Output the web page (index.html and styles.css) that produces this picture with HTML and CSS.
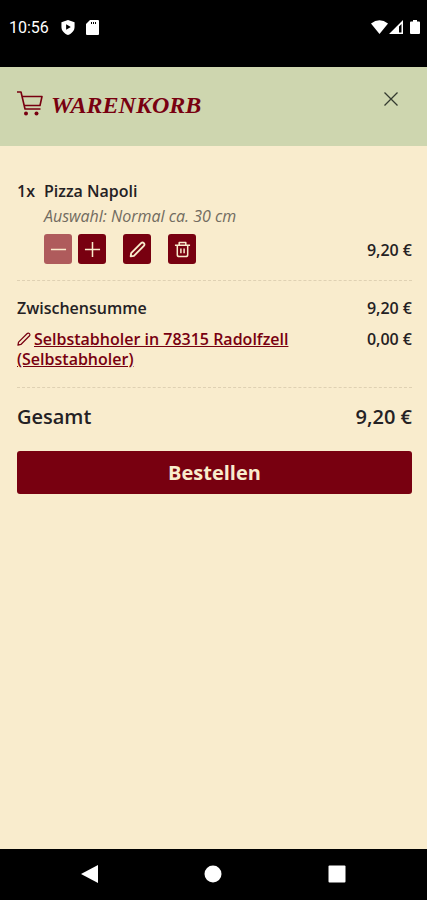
FILE: index.html
```html
<!DOCTYPE html>
<html lang="de">
<head>
<meta charset="utf-8">
<meta name="viewport" content="width=device-width, initial-scale=1">
<title>Warenkorb</title>
<link rel="stylesheet" href="styles.css">
</head>
<body>
<div class="status-bar">
  <time class="clock">10:56</time>
  <svg class="status-icon shield" viewBox="0 0 14 16" aria-hidden="true"><path fill="#fff" fill-rule="evenodd" d="M7 0 14 2.500V7.500C14 11.500 11 14.500 7 16 3 14.500 0 11.500 0 7.500V2.500ZM5 4.500V10.500L10 7.500Z"/></svg>
  <svg class="status-icon card" viewBox="0 0 13 15" aria-hidden="true"><path fill="#fff" d="M4 0H12Q13 0 13 1V14Q13 15 12 15H1Q0 15 0 14V4Z"/><path stroke="#000" stroke-width="1" d="M5.500 2V4M7.500 2V4M9.500 2V4"/></svg>
  <div class="signals">
    <svg class="wifi" viewBox="0 0 17 14" aria-hidden="true"><path fill="#fff" d="M0 3.500Q8.500-3 17 3.500L8.500 14Z"/></svg>
    <svg class="cell" viewBox="0 0 14 14" aria-hidden="true"><path fill="#fff" fill-rule="evenodd" d="M14 0V14H0ZM12.500 4 10 6.500V12.500H12.500Z"/></svg>
    <svg class="battery" viewBox="0 0 10 14" aria-hidden="true"><path fill="#fff" d="M3 0H7V1.500H9Q10 1.500 10 2.500V13Q10 14 9 14H1Q0 14 0 13V2.500Q0 1.500 1 1.500H3Z"/></svg>
  </div>
</div>
<header class="cart-header">
  <svg class="cart-icon" viewBox="0 0 26 25" aria-hidden="true"><g fill="none" stroke="currentColor" stroke-width="1.600" stroke-linejoin="round"><path d="M0 1H4L8 18H23.500"/><path d="M5 5.500H25L23 14.500H7"/></g><circle cx="9" cy="22.500" r="2" fill="currentColor"/><circle cx="19.500" cy="22.500" r="2" fill="currentColor"/></svg>
  <h1 class="title">WARENKORB</h1>
  <button class="close" type="button" aria-label="Schließen"><svg viewBox="0 0 14 14" aria-hidden="true"><path d="M.5.5 13.500 13.500M13.500.5.5 13.500" stroke="currentColor" stroke-width="1.300"/></svg></button>
</header>
<main class="cart">
  <section class="item">
    <span class="quantity">1x</span>
    <div class="details">
      <h2 class="name">Pizza Napoli</h2>
      <p class="option">Auswahl: Normal ca. 30 cm</p>
      <div class="actions">
        <button class="action" type="button" disabled aria-label="Menge verringern"><svg viewBox="0 0 18 18" aria-hidden="true"><path d="M1 9H17"/></svg></button>
        <button class="action" type="button" aria-label="Menge erhöhen"><svg viewBox="0 0 18 18" aria-hidden="true"><path d="M1 9H17M9 1V17"/></svg></button>
        <button class="action separate" type="button" aria-label="Bearbeiten"><svg viewBox="0 0 18 18" aria-hidden="true"><path class="bold" d="M1.800 16.200 2.300 12.800 12.800 2.300C14.800 .3 17.700 3.200 15.700 5.200L5.200 15.700Z"/></svg></button>
        <button class="action separate" type="button" aria-label="Entfernen"><svg viewBox="0 0 18 18" aria-hidden="true"><path d="M1 4.500H17M5.500 4.500V1.500H12.500V4.500M3.500 4.500V14.500Q3.500 16.500 5.500 16.500H12.500Q14.500 16.500 14.500 14.500V4.500M7.300 8V13M10.700 8V13"/></svg></button>
      </div>
    </div>
    <span class="price">9,20 €</span>
  </section>
  <section class="costs">
    <div class="row"><span>Zwischensumme</span><span class="amount">9,20 €</span></div>
    <div class="row">
      <a class="delivery" href="#"><svg class="pencil" viewBox="0 0 18 18" aria-hidden="true"><path d="M1.200 16.800 2 13 12.800 2.200C15 0 18 3 15.800 5.200L5 16Z"/></svg><span class="delivery-text">Selbstabholer in 78315 Radolfzell (Selbstabholer)</span></a>
      <span class="amount">0,00 €</span>
    </div>
  </section>
  <div class="row total"><span>Gesamt</span><span class="amount">9,20 €</span></div>
  <button class="order" type="button">Bestellen</button>
</main>
<nav class="system-nav" aria-label="Navigation">
  <button type="button" aria-label="Zurück"><svg viewBox="0 0 18 18" aria-hidden="true"><path d="M17 0V18L0 9Z"/></svg></button>
  <button type="button" aria-label="Startseite"><svg viewBox="0 0 18 18" aria-hidden="true"><circle cx="9" cy="9" r="8.500"/></svg></button>
  <button type="button" aria-label="Übersicht"><svg viewBox="0 0 18 18" aria-hidden="true"><rect x=".5" y=".5" width="17" height="17" rx="1"/></svg></button>
</nav>
</body>
</html>
```
FILE: styles.css
```css
* {
  box-sizing: border-box;
}

body {
  display: flex;
  flex-direction: column;
  min-height: 100vh;
  margin: 0;
  background: #f9eccd;
  color: #242124;
  font: 600 16px/20px "Open Sans", "Noto Sans", sans-serif;
}

h1, h2, p {
  margin: 0;
}

button {
  padding: 0;
  border: 0;
  font: inherit;
  cursor: pointer;
}

svg {
  display: block;
}

.status-bar {
  display: flex;
  align-items: flex-start;
  padding: 20px 7px 31px 9px;
  background: #000;
  color: #fff;
}

.clock {
  margin-right: 12px;
  font: 400 16px/16px Roboto, sans-serif;
}

.status-icon {
  height: 15px;
}

.shield {
  width: 14px;
  margin-right: 11px;
}

.card {
  width: 13px;
}

.signals {
  display: flex;
  margin-left: auto;
}

.signals svg {
  height: 14px;
}

.wifi {
  width: 17px;
}

.cell {
  width: 14px;
  margin: 0 7px 0 1px;
}

.battery {
  width: 10px;
}

.cart-header {
  display: flex;
  align-items: flex-start;
  padding: 24px 28px 27px 17px;
  background: #ced6af;
  color: #780010;
}

.cart-icon {
  width: 26px;
  height: 25px;
  margin-right: 8px;
}

.title {
  font: italic 700 24px/28px "Liberation Serif", serif;
}

.close {
  margin-left: auto;
  padding: 1px;
  background: none;
  color: #343b30;
}

.close svg {
  width: 14px;
  height: 14px;
}

.cart {
  flex: 1;
  padding: 35px 15px 24px 17px;
}

.item {
  display: flex;
  align-items: flex-end;
  padding-bottom: 16px;
  border-bottom: 1px dashed #dfd1b3;
}

.quantity {
  align-self: flex-start;
  width: 27px;
}

.details {
  flex: 1;
}

.name {
  font: inherit;
}

.option {
  margin-top: 5px;
  color: #716b60;
  font-style: italic;
  font-weight: 400;
}

.actions {
  display: flex;
  gap: 6px;
  margin-top: 8px;
}

.action {
  display: grid;
  place-items: center;
  width: 28px;
  height: 30px;
  border-radius: 3px;
  background: #780010;
  color: #f9eccd;
}

.action:disabled {
  background: #af5b5c;
}

.separate {
  margin-left: 11px;
}

.action svg, .pencil {
  width: 17px;
  height: 17px;
  fill: none;
  stroke: currentColor;
  stroke-width: 1.6;
  stroke-linejoin: round;
}

.bold {
  stroke-width: 2;
}

.price {
  margin-bottom: 4px;
}

.costs {
  display: grid;
  gap: 11px;
  padding: 17px 0 18px;
  border-bottom: 1px dashed #dfd1b3;
}

.row {
  display: flex;
  justify-content: space-between;
  gap: 40px;
}

.amount {
  white-space: nowrap;
}

.delivery {
  color: #780010;
  text-decoration: none;
}

.delivery-text {
  text-decoration: underline;
}

.pencil {
  display: inline-block;
  width: 14px;
  height: 14px;
  margin-right: 3px;
  vertical-align: -1px;
}

.total {
  padding: 15px 0 20px;
  font-size: 20px;
  line-height: 28px;
}

.order {
  width: 100%;
  height: 43px;
  border-radius: 3px;
  background: #780010;
  color: #f9eccd;
  font-size: 20px;
  font-weight: 700;
}

.system-nav {
  display: flex;
  justify-content: space-around;
  padding: 16px 28px 17px;
  background: #000;
}

.system-nav button {
  background: none;
}

.system-nav svg {
  width: 18px;
  height: 18px;
  fill: #fff;
}
```
